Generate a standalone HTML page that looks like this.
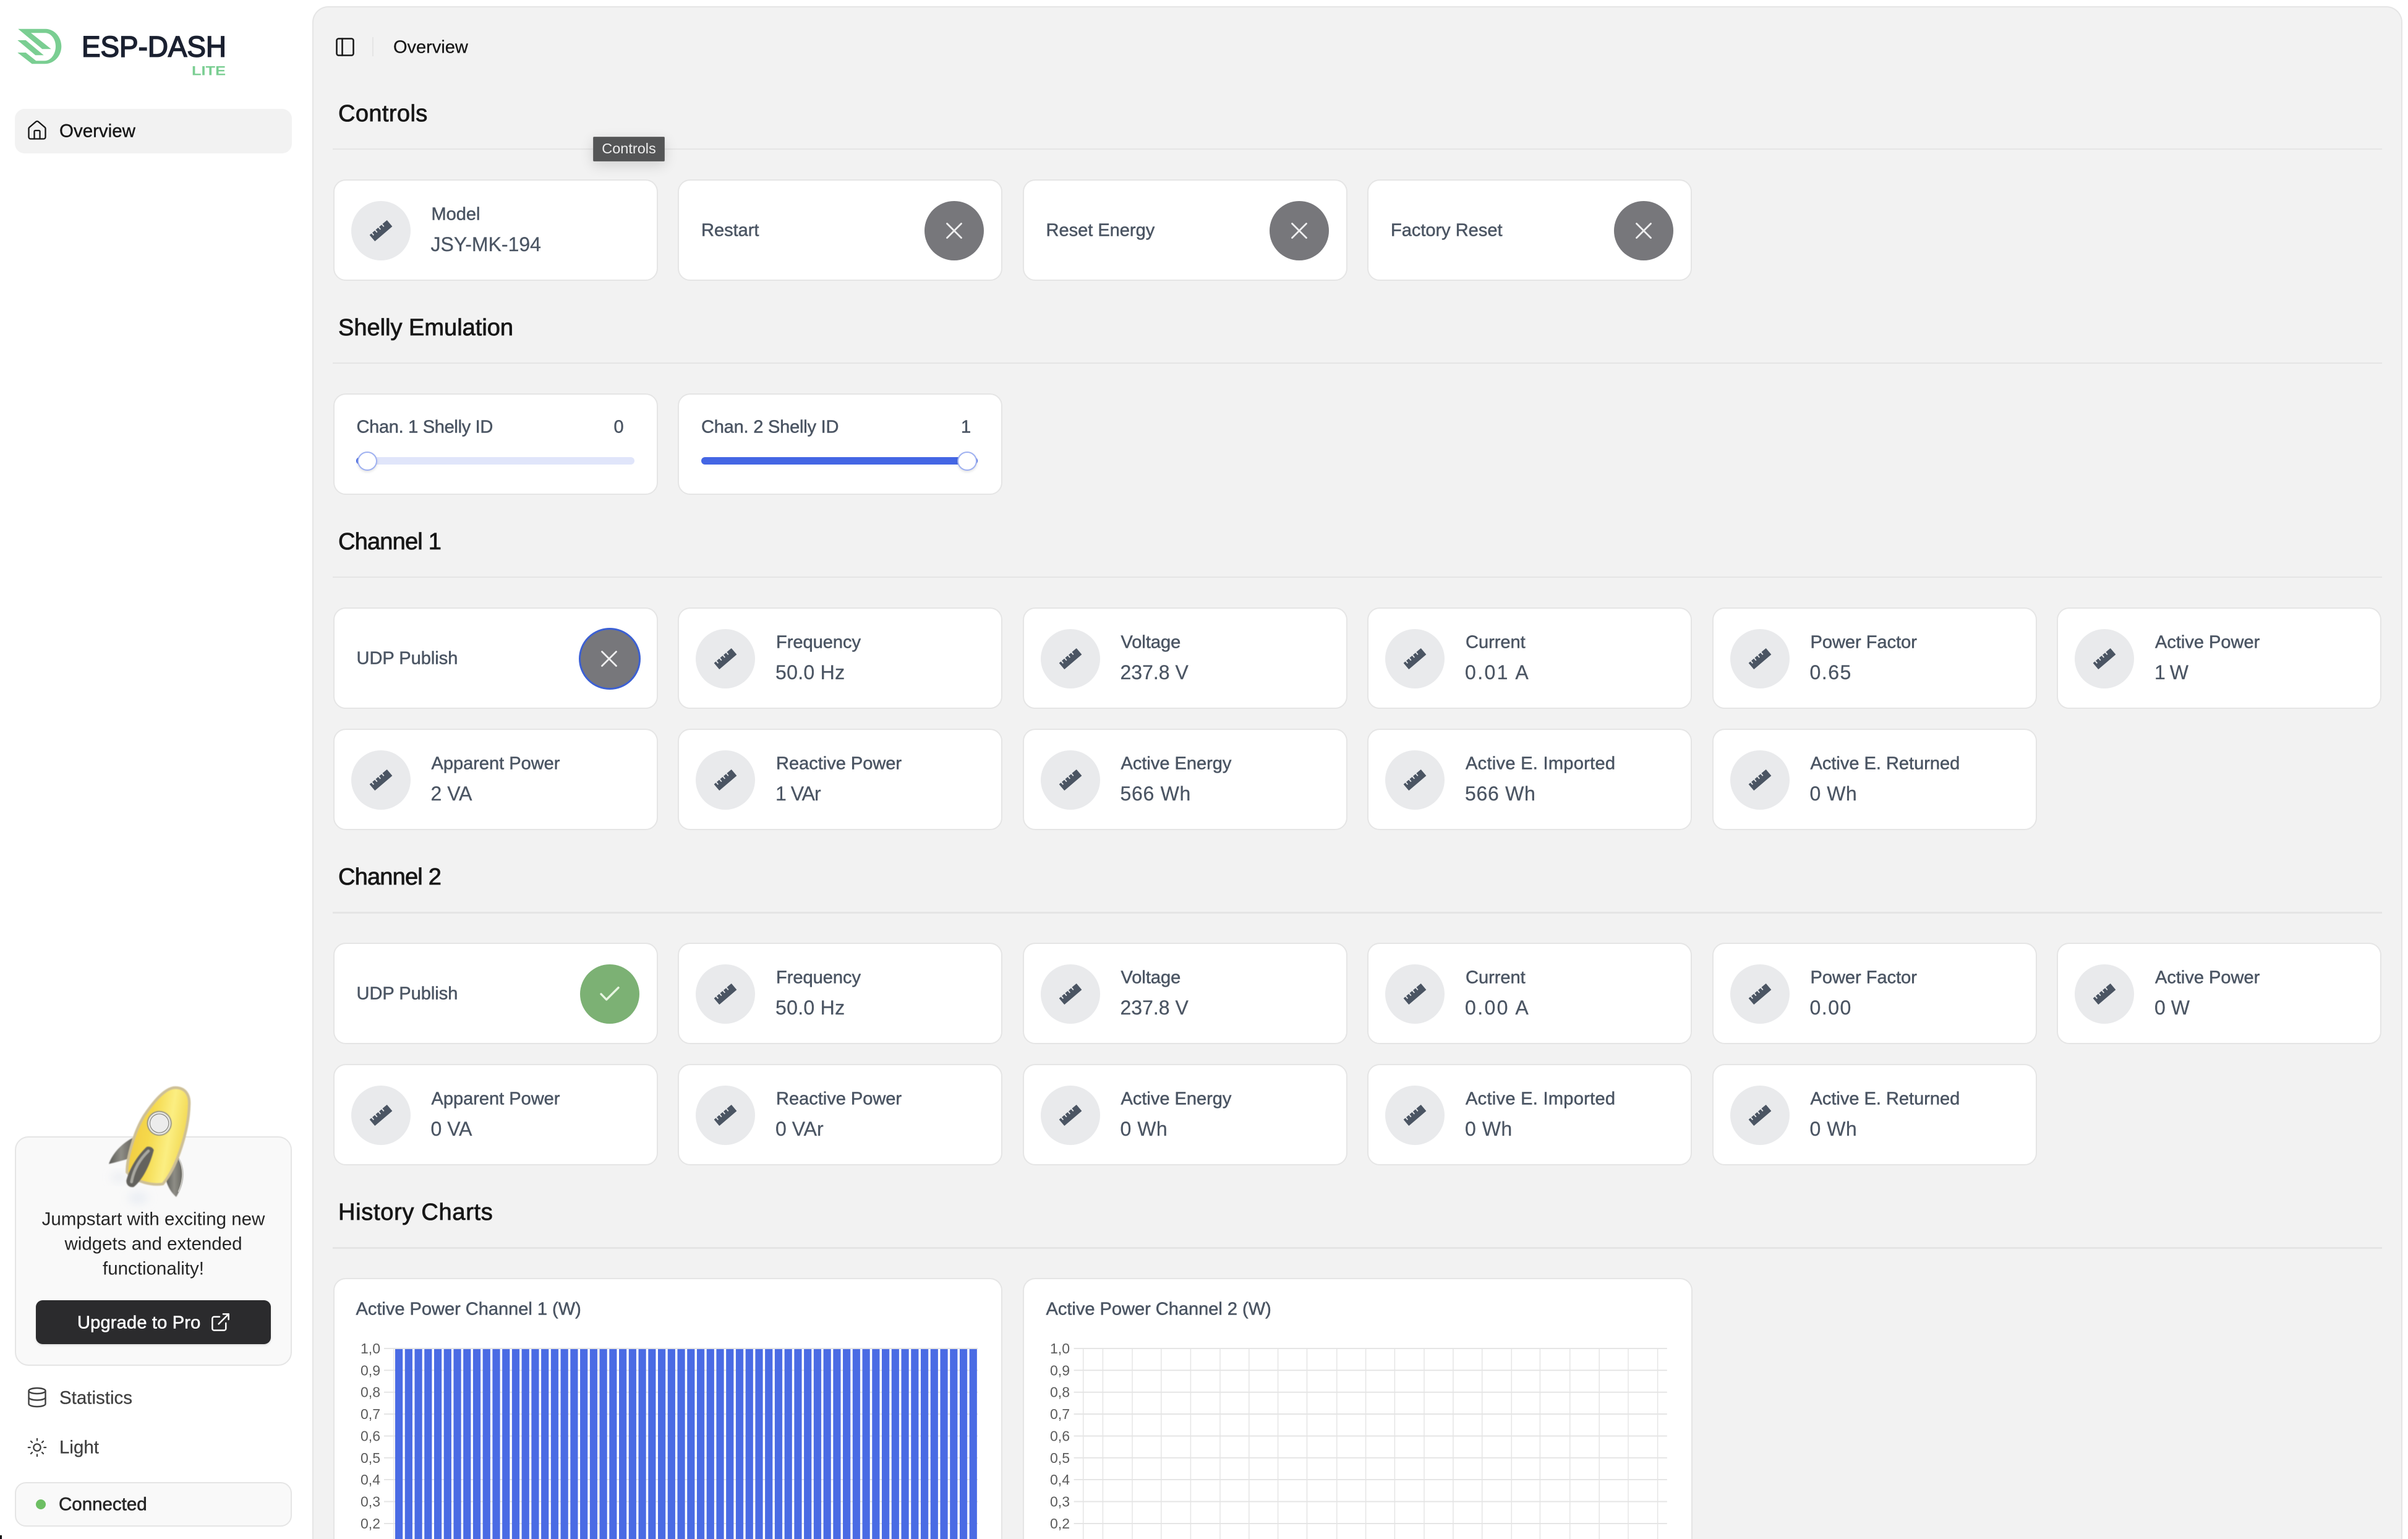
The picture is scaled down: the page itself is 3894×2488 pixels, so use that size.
<!DOCTYPE html>
<html lang="en">
<head>
<meta charset="utf-8">
<title>ESP-DASH Overview</title>
<style>
*{box-sizing:border-box}
html,body{margin:0;padding:0;width:3894px;height:2488px;overflow:hidden;background:#fff;font-family:"Liberation Sans",Arial,sans-serif}
.root{position:absolute;left:0;top:0;width:3894px;height:2488px;overflow:hidden;background:#fff}
.a{position:absolute}
.t{position:absolute;white-space:nowrap;transform:translateY(-50%);line-height:1.2}
.panel{position:absolute;left:505px;top:10px;width:3380px;height:2478px;background:#f2f2f2;border:2.5px solid #e5e5e5;border-bottom:0;border-radius:26px 26px 0 0}
.h{position:absolute;left:547px;white-space:nowrap;transform:translateY(-50%);font-size:38px;line-height:1.2;color:#171717;-webkit-text-stroke:.8px #171717}
.d{position:absolute;left:538px;width:3314px;height:2.5px;background:#e5e5e5}
.c{position:absolute;width:525px;height:164px;margin-left:-1px;margin-top:-1px;background:#fff;border:2.5px solid #e5e5e5;border-radius:20px}
.c .l,.c .v,.c .s{position:absolute;white-space:nowrap;transform:translateY(-50%);line-height:1.2;color:#4b5563}
.c .l{left:157px;top:55px;font-size:29px;-webkit-text-stroke:.5px #4b5563}
.c .v{left:156px;top:102.5px;font-size:32px;-webkit-text-stroke:.25px #4b5563}
.c .s{left:36px;top:81px;font-size:29px;-webkit-text-stroke:.5px #4b5563}
.c .i{position:absolute;left:27px;top:33px;width:96px;height:96px;border-radius:50%;background:#e9eaec}
.c .i svg{position:absolute;left:24px;top:24px;width:48px;height:48px}
.c .b{position:absolute;left:397px;top:33px;width:96px;height:96px;border-radius:50%;background:#77777b}
.c .b svg{position:absolute;left:0;top:0;width:96px;height:96px}
.c .b.on{background:#7cb174}
.c .b.f{left:395px;top:31px;width:100px;height:100px;border:3.5px solid #3c60d3}
.c .b.f svg{left:-1.5px;top:-1.5px}
.track{position:absolute;height:12px;border-radius:6px;top:101px;background:#e0e5fa}
.thumb{position:absolute;top:92px;width:32px;height:31px;border-radius:50%;background:#fff;border:2.5px solid #9fb1f1;box-shadow:0 2px 4px rgba(0,0,0,.12)}
.side{position:absolute;white-space:nowrap;transform:translateY(-50%);line-height:1.2;font-size:29.5px}
</style>
</head>
<body>
<div class="root">
<svg width="0" height="0" style="position:absolute">
  <defs>
    <symbol id="r" viewBox="-24 -24 48 48">
      <g transform="rotate(-40.5)"><path d="M-18 -6.200H-15V-1.500H-12.200V-6.200H-7.800V-1.500H-5V-6.200H-.6V-1.500H2.200V-6.200H6.600V-1.500H9.400V-6.200H18V6.200H-18Z" fill="#4b5563" stroke="#4b5563" stroke-width="1" stroke-linejoin="round"/></g>
    </symbol>
    <symbol id="x" viewBox="0 0 96 96"><path d="M36.500 36.500L59.500 59.500M59.500 36.500L36.500 59.500" fill="none" stroke="#efeff0" stroke-width="2.800" stroke-linecap="round"/></symbol>
    <symbol id="k" viewBox="0 0 96 96"><path d="M34 48L42.700 57L62 37.700" fill="none" stroke="#e8f6e2" stroke-width="3.400" stroke-linecap="round" stroke-linejoin="round"/></symbol>
  </defs>
</svg>

<!-- Sidebar -->
<svg class="a" style="left:0;top:0" width="480" height="140" viewBox="0 0 480 140">
  <path fill="#7ace92" d="M29.300 46.700H73.500C88 46.700 99.300 60 99.300 75C99.300 90 88 103.300 72 103.300H51.700L28.300 85H41.700L58.300 98.300H72C82.500 98.300 90 87 90 75C90 63 82 53.300 73.300 53.300H50L82.700 79.300H68.300Z"/>
  <path fill="#7ace92" d="M28.300 65H41.700L70.700 89.300H57.300Z"/>
  <text x="132" y="91.700" font-family="Liberation Sans" font-size="47.500" fill="#1a2030" stroke="#1a2030" stroke-width="1.700" textLength="234" lengthAdjust="spacingAndGlyphs">ESP-DASH</text>
  <text x="310" y="121.700" font-family="Liberation Sans" font-size="21" font-weight="700" fill="#7ace92" textLength="55" lengthAdjust="spacingAndGlyphs">LITE</text>
</svg>
<div class="a" style="left:24px;top:176px;width:448px;height:72px;background:#f2f2f2;border-radius:16px"></div>
<svg class="a" style="left:42px;top:193px" width="36" height="36" viewBox="0 0 24 24" fill="none" stroke="#171717" stroke-width="1.550" stroke-linecap="round" stroke-linejoin="round"><path d="M3 10a2 2 0 0 1 .709-1.528l7-5.999a2 2 0 0 1 2.582 0l7 5.999A2 2 0 0 1 21 10v9a2 2 0 0 1-2 2H5a2 2 0 0 1-2-2z"/><path d="M15 21v-8a1 1 0 0 0-1-1h-4a1 1 0 0 0-1 1v8"/></svg>
<div class="side" style="left:96px;top:212px;color:#171717;-webkit-text-stroke:.4px #171717">Overview</div>

<div class="a" style="left:24px;top:1837px;width:448px;height:371px;background:#f9f9f9;border:2.5px solid #e5e5e5;border-radius:22px"></div>
<svg class="a" style="left:130px;top:1740px" width="220" height="220" viewBox="0 0 660 660">
  <defs>
    <linearGradient id="yb" x1="0" y1="0" x2="1" y2=".25"><stop offset="0" stop-color="#f0c63a"/><stop offset=".45" stop-color="#f5d94c"/><stop offset=".75" stop-color="#fbee82"/><stop offset="1" stop-color="#f3da55"/></linearGradient>
    <linearGradient id="fin" x1="0" y1="0" x2="1" y2="0"><stop offset="0" stop-color="#5a5a56"/><stop offset=".5" stop-color="#8e8d86"/><stop offset="1" stop-color="#66655f"/></linearGradient>
    <filter id="bl" x="-50%" y="-50%" width="200%" height="200%"><feGaussianBlur stdDeviation="22"/></filter>
    <filter id="bs" x="-20%" y="-20%" width="140%" height="140%"><feGaussianBlur stdDeviation="2.500"/></filter>
  </defs>
  <ellipse cx="280" cy="590" rx="50" ry="28" fill="#dfe5ef" opacity=".6" filter="url(#bl)"/>
  <ellipse cx="190" cy="490" rx="42" ry="22" fill="#e3e7ee" opacity=".7" filter="url(#bl)"/>
  <path d="M255 298C200 325 155 375 138 425C170 418 205 408 240 398Z" fill="url(#fin)" filter="url(#bs)"/>
  <path d="M475 395C505 440 510 510 465 585C435 560 420 525 412 490Z" fill="url(#fin)" filter="url(#bs)"/>
  <path d="M478 402C500 445 502 500 475 560" fill="none" stroke="#cfcec8" stroke-width="5"/>
  <path d="M460 55C505 55 532 85 528 140C525 260 470 440 400 522C350 530 270 515 226 465C225 400 260 270 310 190C350 130 410 55 460 55Z" fill="url(#yb)" stroke="#cdbf96" stroke-width="13" filter="url(#bs)"/>
  <circle cx="383" cy="228" r="60" fill="#8f8f8b" filter="url(#bs)"/>
  <circle cx="383" cy="228" r="55" fill="#e5e4de"/>
  <circle cx="383" cy="228" r="47" fill="#777773"/>
  <circle cx="383" cy="228" r="44" fill="#ececec"/>
  <path d="M322 342C335 338 352 345 356 358C335 440 295 510 258 537C238 540 222 528 223 505C240 440 285 375 322 342Z" fill="#63625d" filter="url(#bs)"/>
  <path d="M330 362C285 405 258 455 248 512" fill="none" stroke="#a8a7a0" stroke-width="14" stroke-linecap="round" filter="url(#bs)"/>
</svg>
<div class="side" style="left:248px;top:1971px;transform:translate(-50%,-50%);color:#262626">Jumpstart with exciting new</div>
<div class="side" style="left:248px;top:2011px;transform:translate(-50%,-50%);color:#262626">widgets and extended</div>
<div class="side" style="left:248px;top:2051px;transform:translate(-50%,-50%);color:#262626">functionality!</div>
<div class="a" style="left:58px;top:2102px;width:380px;height:71px;background:#2b2b2d;border-radius:11px;box-shadow:0 2px 3px rgba(0,0,0,.1)"></div>
<div class="side" style="left:125px;top:2139px;color:#fff;font-size:29px;letter-spacing:.2px;-webkit-text-stroke:.6px #fff">Upgrade to Pro</div>
<svg class="a" style="left:339px;top:2120px" width="35" height="35" viewBox="0 0 24 24" fill="none" stroke="#fff" stroke-width="1.700" stroke-linecap="round" stroke-linejoin="round"><path d="M15 3h6v6"/><path d="M10 14 21 3"/><path d="M18 13v6a2 2 0 0 1-2 2H5a2 2 0 0 1-2-2V8a2 2 0 0 1 2-2h6"/></svg>

<svg class="a" style="left:42px;top:2241px" width="36" height="36" viewBox="0 0 24 24" fill="none" stroke="#404040" stroke-width="1.600" stroke-linecap="round" stroke-linejoin="round"><ellipse cx="12" cy="5" rx="9" ry="3"/><path d="M3 5v14a9 3 0 0 0 18 0V5"/><path d="M3 12a9 3 0 0 0 18 0"/></svg>
<div class="side" style="left:96px;top:2260px;color:#404040;-webkit-text-stroke:.25px #404040">Statistics</div>
<svg class="a" style="left:43px;top:2323px" width="34" height="34" viewBox="0 0 24 24" fill="none" stroke="#404040" stroke-width="1.600" stroke-linecap="round" stroke-linejoin="round"><circle cx="12" cy="12" r="4"/><path d="M12 2v2M12 20v2M4.930 4.930l1.410 1.410M17.660 17.660l1.410 1.410M2 12h2M20 12h2M6.340 17.660l-1.410 1.410M19.070 4.930l-1.410 1.410"/></svg>
<div class="side" style="left:96px;top:2340px;color:#404040;-webkit-text-stroke:.25px #404040">Light</div>
<div class="a" style="left:24px;top:2396px;width:448px;height:71.500px;background:#f9f9f9;border:2.5px solid #e5e5e5;border-radius:18px"></div>
<div class="a" style="left:58px;top:2424px;width:16px;height:16px;border-radius:50%;background:#6dbf63"></div>
<div class="side" style="left:95px;top:2432px;color:#262626;-webkit-text-stroke:.6px #262626">Connected</div>
<div class="a" style="left:0;top:2482px;width:3px;height:6px;background:#111"></div>

<!-- Main panel -->
<div class="panel"></div>
<svg class="a" style="left:540px;top:58px" width="36" height="36" viewBox="0 0 24 24" fill="none" stroke="#171717" stroke-width="1.700" stroke-linecap="round" stroke-linejoin="round"><rect x="3" y="3" width="18" height="18" rx="2"/><path d="M9 3v18"/></svg>
<div class="a" style="left:602px;top:60px;width:2px;height:31px;background:#e5e5e5"></div>
<div class="t" style="left:636px;top:77px;font-size:29px;color:#171717;-webkit-text-stroke:.3px #171717">Overview</div>

<div class="h" style="top:185px;letter-spacing:.4px">Controls</div><div class="d" style="top:239.500px"></div>
<div class="h" style="top:531px">Shelly Emulation</div><div class="d" style="top:585.500px"></div>
<div class="h" style="top:877px;letter-spacing:-.8px">Channel 1</div><div class="d" style="top:931.500px"></div>
<div class="h" style="top:1419px;letter-spacing:-.8px">Channel 2</div><div class="d" style="top:1474px"></div>
<div class="h" style="top:1961px;letter-spacing:.7px">History Charts</div><div class="d" style="top:2016px"></div>

<!-- Controls -->
<div class="c" style="left:539.500px;top:291px"><div class="i"><svg><use href="#r"/></svg></div><div class="l">Model</div><div class="v">JSY-MK-194</div></div>
<div class="c" style="left:1097px;top:291px"><div class="s">Restart</div><div class="b"><svg><use href="#x"/></svg></div></div>
<div class="c" style="left:1654.500px;top:291px"><div class="s">Reset Energy</div><div class="b"><svg><use href="#x"/></svg></div></div>
<div class="c" style="left:2212px;top:291px"><div class="s">Factory Reset</div><div class="b"><svg><use href="#x"/></svg></div></div>

<!-- Shelly -->
<div class="c" style="left:539.500px;top:637px"><div class="s" style="top:53px;letter-spacing:-.3px">Chan. 1 Shelly ID</div><div class="s" style="left:452px;top:53px">0</div><div class="track" style="left:35px;width:450px"></div><div class="a" style="left:35px;top:101px;width:12px;height:12px;border-radius:6px;background:#4466e4"></div><div class="thumb" style="left:37px"></div></div>
<div class="c" style="left:1097px;top:637px"><div class="s" style="top:53px;letter-spacing:-.2px">Chan. 2 Shelly ID</div><div class="s" style="left:456px;top:53px">1</div><div class="track" style="left:36px;width:447px;background:#4466e4"></div><div class="thumb" style="left:450px"></div></div>

<!-- Channel 1 -->
<div class="c" style="left:539.500px;top:983px"><div class="s">UDP Publish</div><div class="b f"><svg><use href="#x"/></svg></div></div>
<div class="c" style="left:1097px;top:983px"><div class="i"><svg><use href="#r"/></svg></div><div class="l">Frequency</div><div class="v" style="letter-spacing:.3px">50.0 Hz</div></div>
<div class="c" style="left:1654.500px;top:983px"><div class="i"><svg><use href="#r"/></svg></div><div class="l">Voltage</div><div class="v">237.8 V</div></div>
<div class="c" style="left:2212px;top:983px"><div class="i"><svg><use href="#r"/></svg></div><div class="l">Current</div><div class="v" style="letter-spacing:2.400px">0.01 A</div></div>
<div class="c" style="left:2769.500px;top:983px"><div class="i"><svg><use href="#r"/></svg></div><div class="l">Power Factor</div><div class="v" style="letter-spacing:1.500px">0.65</div></div>
<div class="c" style="left:3327px;top:983px"><div class="i"><svg><use href="#r"/></svg></div><div class="l">Active Power</div><div class="v" style="letter-spacing:-1px">1 W</div></div>
<div class="c" style="left:539.500px;top:1179px"><div class="i"><svg><use href="#r"/></svg></div><div class="l">Apparent Power</div><div class="v">2 VA</div></div>
<div class="c" style="left:1097px;top:1179px"><div class="i"><svg><use href="#r"/></svg></div><div class="l">Reactive Power</div><div class="v" style="letter-spacing:-1px">1 VAr</div></div>
<div class="c" style="left:1654.500px;top:1179px"><div class="i"><svg><use href="#r"/></svg></div><div class="l">Active Energy</div><div class="v" style="letter-spacing:.7px">566 Wh</div></div>
<div class="c" style="left:2212px;top:1179px"><div class="i"><svg><use href="#r"/></svg></div><div class="l" style="letter-spacing:.3px">Active E. Imported</div><div class="v" style="letter-spacing:.7px">566 Wh</div></div>
<div class="c" style="left:2769.500px;top:1179px"><div class="i"><svg><use href="#r"/></svg></div><div class="l">Active E. Returned</div><div class="v" style="letter-spacing:.5px">0 Wh</div></div>

<!-- Channel 2 -->
<div class="c" style="left:539.500px;top:1525px"><div class="s">UDP Publish</div><div class="b on"><svg><use href="#k"/></svg></div></div>
<div class="c" style="left:1097px;top:1525px"><div class="i"><svg><use href="#r"/></svg></div><div class="l">Frequency</div><div class="v" style="letter-spacing:.3px">50.0 Hz</div></div>
<div class="c" style="left:1654.500px;top:1525px"><div class="i"><svg><use href="#r"/></svg></div><div class="l">Voltage</div><div class="v">237.8 V</div></div>
<div class="c" style="left:2212px;top:1525px"><div class="i"><svg><use href="#r"/></svg></div><div class="l">Current</div><div class="v" style="letter-spacing:2.400px">0.00 A</div></div>
<div class="c" style="left:2769.500px;top:1525px"><div class="i"><svg><use href="#r"/></svg></div><div class="l">Power Factor</div><div class="v" style="letter-spacing:1.500px">0.00</div></div>
<div class="c" style="left:3327px;top:1525px"><div class="i"><svg><use href="#r"/></svg></div><div class="l">Active Power</div><div class="v">0 W</div></div>
<div class="c" style="left:539.500px;top:1721px"><div class="i"><svg><use href="#r"/></svg></div><div class="l">Apparent Power</div><div class="v">0 VA</div></div>
<div class="c" style="left:1097px;top:1721px"><div class="i"><svg><use href="#r"/></svg></div><div class="l">Reactive Power</div><div class="v">0 VAr</div></div>
<div class="c" style="left:1654.500px;top:1721px"><div class="i"><svg><use href="#r"/></svg></div><div class="l">Active Energy</div><div class="v" style="letter-spacing:.5px">0 Wh</div></div>
<div class="c" style="left:2212px;top:1721px"><div class="i"><svg><use href="#r"/></svg></div><div class="l" style="letter-spacing:.3px">Active E. Imported</div><div class="v" style="letter-spacing:.5px">0 Wh</div></div>
<div class="c" style="left:2769.500px;top:1721px"><div class="i"><svg><use href="#r"/></svg></div><div class="l">Active E. Returned</div><div class="v" style="letter-spacing:.5px">0 Wh</div></div>

<!-- Charts -->
<div class="c" style="left:539.500px;top:2067px;width:1082.500px;height:422px;border-bottom:0;border-radius:20px 20px 0 0"><div class="s" style="top:49px;left:35px">Active Power Channel 1 (W)</div></div>
<div class="c" style="left:1654.500px;top:2067px;width:1083px;height:422px;border-bottom:0;border-radius:20px 20px 0 0"><div class="s" style="top:49px;left:36px">Active Power Channel 2 (W)</div></div>

<svg class="a" style="left:0;top:0" width="3894" height="2488" viewBox="0 0 3894 2488" font-family="Liberation Sans" font-size="23" fill="#5c5c5c" text-anchor="end">
  <defs><pattern id="bars" patternUnits="userSpaceOnUse" x="639" y="2180" width="15.740" height="320"><rect x="0" y="0" width="12.200" height="320" fill="#4a6be4"/></pattern></defs>
  <!-- chart 1 -->
  <g stroke="#e5e5e5" stroke-width="2">
    <path d="M621 2180H1581M621 2215.300H1581M621 2250.700H1581M621 2286H1581M621 2321.500H1581M621 2356.800H1581M621 2392H1581M621 2427.500H1581M621 2463H1581" fill="none"/>
    <path d="M637 2180V2488M968 2180V2488M1119 2180V2488M1420 2180V2488" fill="none" stroke-width="1.500"/>
  </g>
  <rect x="639" y="2181" width="944" height="307" fill="url(#bars)"/>
  <g transform="translate(0,8)">
    <text x="615" y="2180">1,0</text><text x="615" y="2215.300">0,9</text><text x="615" y="2250.700">0,8</text><text x="615" y="2286">0,7</text><text x="615" y="2321.500">0,6</text><text x="615" y="2356.800">0,5</text><text x="615" y="2392">0,4</text><text x="615" y="2427.500">0,3</text><text x="615" y="2463">0,2</text>
  </g>
  <!-- chart 2 -->
  <g stroke="#e5e5e5" fill="none">
    <path stroke-width="2" d="M1736.600 2180H2695.800M1736.600 2215.300H2695.800M1736.600 2250.700H2695.800M1736.600 2286H2695.800M1736.600 2321.500H2695.800M1736.600 2356.800H2695.800M1736.600 2392H2695.800M1736.600 2427.500H2695.800M1736.600 2463H2695.800"/>
    <path stroke-width="1.500" d="M1751.700 2180V2488M1783.400 2180V2488M1831 2180V2488M1877.800 2180V2488M1925.400 2180V2488M1973 2180V2488M2019.800 2180V2488M2066.600 2180V2488M2113.500 2180V2488M2161.800 2180V2488M2208.600 2180V2488M2255.400 2180V2488M2303 2180V2488M2349.900 2180V2488M2396.700 2180V2488M2444.300 2180V2488M2490.400 2180V2488M2538.700 2180V2488M2586.200 2180V2488M2633 2180V2488M2680.600 2180V2488"/>
  </g>
  <g transform="translate(0,8)">
    <text x="1730" y="2180">1,0</text><text x="1730" y="2215.300">0,9</text><text x="1730" y="2250.700">0,8</text><text x="1730" y="2286">0,7</text><text x="1730" y="2321.500">0,6</text><text x="1730" y="2356.800">0,5</text><text x="1730" y="2392">0,4</text><text x="1730" y="2427.500">0,3</text><text x="1730" y="2463">0,2</text>
  </g>
</svg>

<!-- Tooltip -->
<div class="a" style="left:959px;top:221px;width:116px;height:40px;background:#545556;border:1.500px solid #6b6b6c;border-radius:2px;box-shadow:0 6px 22px rgba(0,0,0,.14);color:#eee;font-size:23.500px;line-height:37px;text-align:center">Controls</div>
</div>
</body>
</html>
